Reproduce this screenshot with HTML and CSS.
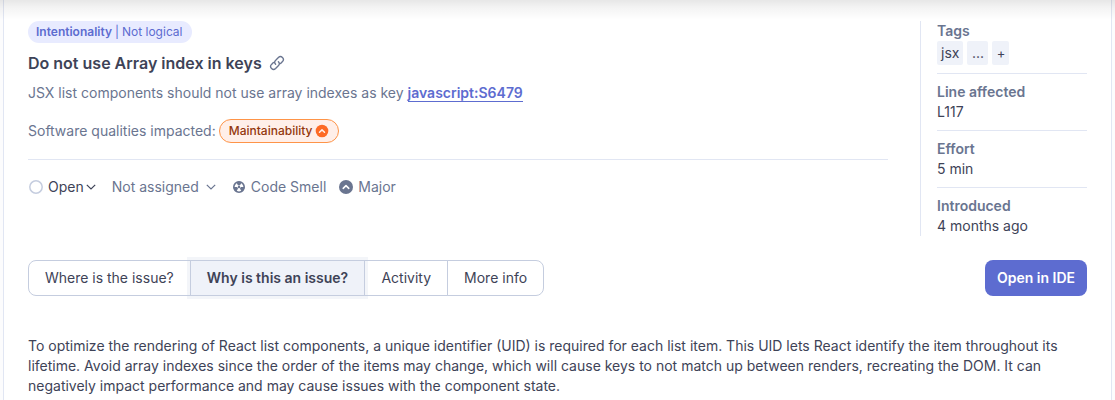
FILE: index.html
```html
<!DOCTYPE html>
<html lang="en">
<head>
<meta charset="utf-8">
<title>Issue details</title>
<link rel="stylesheet" href="styles.css">
</head>
<body>
<main class="panel">
  <header class="issue-header">
    <div class="summary">
      <div class="clean-code"><b>Intentionality</b><i>|</i><span>Not logical</span></div>
      <h1 class="title"><span>Do not use Array index in keys</span>
        <svg class="link-icon" width="16" height="16" viewBox="0 0 16 16" fill="none" stroke="currentColor" stroke-width="1.35" stroke-linecap="round"><path d="M6.600 9.300a2.900 2.900 0 0 1 .1-4.100l2.700-2.700a2.900 2.900 0 0 1 4.100 4.100l-1.900 1.900M9.400 6.700a2.900 2.900 0 0 1-.1 4.100l-2.700 2.700a2.900 2.900 0 0 1-4.100-4.100l1.900-1.900"/></svg>
      </h1>
      <p class="description">JSX list components should not use array indexes as key <a class="rule">javascript:S6479</a></p>
      <div class="qualities"><span>Software qualities impacted:</span>
        <span class="quality"><span>Maintainability</span>
          <svg width="14" height="14" viewBox="0 0 14 14"><circle cx="7" cy="7" r="6.300" fill="#fd6a25"/><path d="M4.500 8.200 7 5.900l2.500 2.300" fill="none" stroke="#ffefe9" stroke-width="1.500" stroke-linecap="round" stroke-linejoin="round"/></svg>
        </span>
      </div>
      <div class="meta">
        <span class="status"><svg width="14" height="14" viewBox="0 0 14 14"><circle cx="7" cy="7" r="6.2" fill="none" stroke="#c5cddf" stroke-width="1.5"/></svg><span>Open</span><svg width="10" height="6" viewBox="0 0 10 6"><path d="m.8.8 4.2 4.2L9.200.8" fill="none" stroke="currentColor" stroke-width="1.2"/></svg></span>
        <span class="assignee">Not assigned<svg width="10" height="6" viewBox="0 0 10 6"><path d="m.8.8 4.2 4.2L9.200.8" fill="none" stroke="currentColor" stroke-width="1.2"/></svg></span>
        <span class="kind"><svg width="12" height="12" viewBox="0 0 12 12"><circle cx="6" cy="6" r="5.200" fill="#fff" stroke="currentColor" stroke-width="1.600"/><path d="M6 6 3.200 1.200a5.600 5.600 0 0 1 5.600 0ZM6 6H.4a5.600 5.600 0 0 0 2.800 4.850ZM6 6l2.800 4.850A5.600 5.600 0 0 0 11.600 6Z" fill="currentColor"/><circle cx="6" cy="6" r="1.700" fill="#fff"/><circle cx="6" cy="6" r="1.200" fill="currentColor"/></svg>Code Smell</span>
        <span class="severity"><svg width="14" height="14" viewBox="0 0 14 14"><circle cx="7" cy="7" r="7" fill="currentColor"/><path d="M4.200 8.300 7 5.700l2.800 2.600" fill="none" stroke="#fff" stroke-width="1.600" stroke-linecap="round" stroke-linejoin="round"/></svg>Major</span>
      </div>
    </div>
    <aside class="facts">
      <div class="fact"><b>Tags</b><div class="tags"><span>jsx</span><span class="more">...</span><span class="add">+</span></div></div>
      <div class="fact"><b>Line affected</b><span>L117</span></div>
      <div class="fact"><b>Effort</b><span>5 min</span></div>
      <div class="fact"><b>Introduced</b><span>4 months ago</span></div>
    </aside>
  </header>
  <nav class="toolbar">
    <div class="tabs">
      <button class="tab where">Where is the issue?</button>
      <button class="tab why selected">Why is this an issue?</button>
      <button class="tab activity">Activity</button>
      <button class="tab info">More info</button>
    </div>
    <button class="open-ide">Open in IDE</button>
  </nav>
  <p class="explanation">To optimize the rendering of React list components, a unique identifier (UID) is required for each list item. This UID lets React identify the item throughout its lifetime. Avoid array indexes since the order of the items may change, which will cause keys to not match up between renders, recreating the DOM. It can negatively impact performance and may cause issues with the component state.</p>
</main>
<div class="top-shadow"></div>
</body>
</html>
```

FILE: styles.css
```css
* { box-sizing: border-box; }
body {
  margin: 0;
  height: 400px;
  overflow: hidden;
  background: #fcfcfd;
  color: #3e4357;
  font: 400 14px/20px Inter, "Liberation Sans", sans-serif;
}
b { font-weight: 600; }
button { font: inherit; color: inherit; margin: 0; }
svg { flex: none; }

.panel {
  width: 1109px;
  height: 400px;
  margin-left: 3px;
  padding: 21px 24px 0;
  background: #fff;
  border: solid #e1e6f3;
  border-width: 0 1px;
}
.top-shadow {
  position: absolute;
  inset: 0 0 auto;
  height: 20px;
  background: linear-gradient(rgba(0, 0, 0, .095), rgba(0, 0, 0, .045) 40%, rgba(0, 0, 0, 0));
}

.issue-header { display: flex; gap: 32px; height: 215px; }
.summary { width: 860px; display: flex; flex-direction: column; align-items: flex-start; }
.clean-code {
  display: flex;
  width: 164px;
  height: 22px;
  padding: 0 8px;
  border-radius: 11px;
  background: #e8ebff;
  color: #5d6cd0;
  font-size: 12px;
  line-height: 22px;
  white-space: nowrap;
}
.clean-code i { margin: 0 3px; font-style: normal; }
.title {
  display: flex;
  align-items: center;
  gap: 7px;
  margin: 8px 0 0;
  font-size: 16px;
  font-weight: 600;
  line-height: 24px;
}
.link-icon { color: #6a7590; }
.description { margin: 8px 0 0; color: #6a7590; }
.rule {
  color: #5d6cd0;
  font-weight: 600;
  border-bottom: 1px solid #5d6cd0;
}
.qualities {
  display: flex;
  align-items: center;
  gap: 3px;
  width: 860px;
  height: 57px;
  padding: 16px 0;
  border-bottom: 1px solid #e1e6f3;
  color: #6a7590;
}
.quality {
  display: flex;
  align-items: center;
  gap: 3px;
  width: 120px;
  height: 24px;
  padding: 0 0 0 9px;
  border: 1px solid #fe9448;
  border-radius: 12px;
  background: #ffefe9;
  color: #93370d;
  font-size: 12px;
  font-weight: 500;
}
.meta { display: flex; margin-top: 17px; color: #6a7590; }
.meta > span { display: flex; align-items: center; }
.status { gap: 2px; margin-right: 16px; color: #3e4357; }
.status > :first-child { margin: 0 3px 0 1px; }
.assignee { gap: 7px; margin-right: 17px; }
.kind { gap: 6px; margin-right: 13px; }
.severity { gap: 5px; }

.facts {
  width: 167px;
  padding-left: 16px;
  border-left: 1px solid #e1e6f3;
}
.fact { display: flex; flex-direction: column; }
.fact + .fact { margin-top: 8px; padding-top: 8px; border-top: 1px solid #e1e6f3; }
.fact b { color: #6a7590; }
.tags { display: flex; gap: 4px; height: 24px; line-height: 24px; }
.tags span { padding: 0 4px; border-radius: 2px; background: #eff2f9; text-align: center; }
.tags .more { width: 21px; }
.tags .add { width: 17px; padding: 0; font-size: 13px; line-height: 25px; }

.toolbar { display: flex; justify-content: space-between; margin-top: 24px; }
.tabs { display: flex; width: 516px; }
.tab {
  height: 36px;
  padding: 0;
  border: 1px solid #c5cddf;
  background: #fff;
}
.tab + .tab { margin-left: -1px; }
.where { width: 163px; border-radius: 8px 0 0 8px; }
.why { width: 176px; }
.activity { width: 84px; }
.info { width: 97px; border-radius: 0 8px 8px 0; }
.selected {
  background: #eff2f9;
  font-weight: 600;
  box-shadow: 0 0 0 3px rgba(197, 205, 223, .2);
  z-index: 1;
}
.open-ide {
  width: 102px;
  height: 36px;
  padding: 0;
  border: 0;
  border-radius: 8px;
  background: #5d6cd0;
  color: #fff;
  font-weight: 600;
}
.explanation { margin: 40px 0 0; }
```
